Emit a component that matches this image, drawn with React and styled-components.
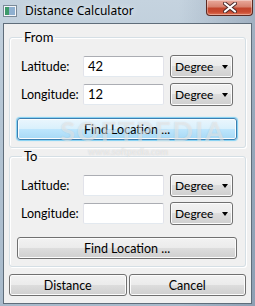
import React from "react";
import styled, { createGlobalStyle, css } from "styled-components";

const Global = createGlobalStyle`
  html, body { margin: 0; padding: 0; }
  body {
    width: 255px;
    height: 306px;
    overflow: hidden;
    font-family: Lato, "Noto Sans", "DejaVu Sans", sans-serif;
  }
`;

const Window = styled.div`
  position: relative;
  width: 255px;
  height: 306px;
  box-sizing: border-box;
  display: flex;
  flex-direction: column;
  background:
    linear-gradient(90deg, rgba(255,255,255,0) 70%, rgba(60,80,110,0.25) 100%),
    linear-gradient(180deg, #c5d3df 0%, #b4c5d4 40%, #a8bacb 100%);
  overflow: hidden;
`;

const TitleBar = styled.div`
  height: 23px;
  display: flex;
  align-items: flex-start;
  padding-left: 3px;
  flex-shrink: 0;
`;

const AppIcon = styled.svg`
  width: 14px;
  height: 12px;
  margin-top: 5px;
  flex-shrink: 0;
`;

const Title = styled.span`
  margin-left: 8px;
  margin-top: 3px;
  font-family: "Noto Sans", sans-serif;
  font-size: 12px;
  line-height: 16px;
  color: #000;
  text-shadow: 0 0 6px rgba(255,255,255,0.9);
`;

const CloseButton = styled.div`
  margin-left: auto;
  margin-right: 2px;
  width: 47px;
  height: 16px;
  box-sizing: border-box;
  border: 1px solid #5c2a22;
  border-top: none;
  border-radius: 0 0 4px 4px;
  background: linear-gradient(180deg, #e9aa9c 0%, #d7826f 45%, #c2452c 55%, #c94b31 80%, #e0785b 100%);
  box-shadow: inset 0 0 0 1px rgba(255,255,255,0.35);
  display: flex;
  align-items: center;
  justify-content: center;
`;

const Client = styled.div`
  margin: 0 3px 0 3px;
  height: 281px;
  box-sizing: border-box;
  border: 1px solid #5f6d7a;
  background: #f0f0f0;
  padding: 5px 5px 0 5px;
  display: flex;
  flex-direction: column;
`;

const Group = styled.fieldset`
  margin: 0;
  width: 237px;
  box-sizing: border-box;
  padding: 10px 7px 7px 7px;
  border: 1px solid #d5dfe5;
  border-radius: 3px;
  box-shadow: inset 1px 1px 0 #fff, 1px 1px 0 #fff;
  min-inline-size: 0;
`;

const Legend = styled.legend`
  margin-left: 5px;
  padding: 0 2px;
  font-size: 13px;
  line-height: 16px;
  color: #000;
`;

const Rows = styled.div`
  display: flex;
  flex-direction: column;
  gap: 6px;
`;

const Row = styled.div`
  display: flex;
  align-items: center;
  height: 22px;
`;

const FieldLabel = styled.span`
  width: 62px;
  margin-left: 4px;
  font-size: 12.5px;
  color: #000;
  white-space: nowrap;
`;

const TextBox = styled.div`
  width: 81px;
  height: 21px;
  box-sizing: border-box;
  border: 1px solid #e2e3ea;
  border-top-color: #abadb3;
  border-bottom-color: #e3e9ef;
  border-radius: 2px;
  background: #fff;
  padding-left: 4px;
  font-size: 13px;
  line-height: 19px;
  color: #000;
`;

const buttonFace = css`
  box-sizing: border-box;
  border: 1px solid #707070;
  border-radius: 3px;
  background: linear-gradient(180deg, #f2f2f2 0%, #ebebeb 49%, #dddddd 50%, #cfcfcf 100%);
  box-shadow: inset 0 0 0 1px #fcfcfc;
  font-family: inherit;
  font-size: 12.5px;
  color: #000;
`;

const Combo = styled.div`
  ${buttonFace}
  margin-left: 6px;
  width: 63px;
  height: 23px;
  display: flex;
  align-items: center;
  padding: 0 4px 0 4px;
  justify-content: space-between;
  font-size: 12px;
`;

const Arrow = styled.span`
  width: 0;
  height: 0;
  border-left: 3.5px solid transparent;
  border-right: 3.5px solid transparent;
  border-top: 4px solid #000;
  margin-top: 1px;
`;

const PushButton = styled.div`
  ${buttonFace}
  height: 22px;
  display: flex;
  align-items: center;
  justify-content: center;
  ${(p) =>
    p.$focused &&
    css`
      border-color: #3c7fb1;
      background: linear-gradient(180deg, #eaf6fd 0%, #d9f0fc 49%, #bee6fd 50%, #a7d9f5 100%);
      box-shadow: inset 0 0 0 1px #fcfcfc, 0 0 1px 1px #7fd0f3;
    `}
`;

const FindButton = styled(PushButton)`
  margin-top: 13px;
  width: 220px;
`;

const Footer = styled.div`
  display: flex;
  gap: 2px;
  margin-top: 7px;
`;

const FooterButton = styled(PushButton)`
  flex: 1;
`;

const Watermark = styled.div`
  position: absolute;
  left: ${(p) => p.$x}px;
  top: ${(p) => p.$y}px;
  font-size: ${(p) => p.$size}px;
  font-weight: bold;
  letter-spacing: ${(p) => p.$spacing || 0}px;
  color: rgba(255, 255, 255, 0.45);
  text-shadow: 0 0 1px rgba(120, 120, 120, 0.25);
  pointer-events: none;
  white-space: nowrap;
`;

const Coordinates = ({ lat, lon }) => (
  <Rows>
    <Row>
      <FieldLabel>Latitude:</FieldLabel>
      <TextBox>{lat}</TextBox>
      <Combo>
        Degree
        <Arrow />
      </Combo>
    </Row>
    <Row>
      <FieldLabel>Longitude:</FieldLabel>
      <TextBox>{lon}</TextBox>
      <Combo>
        Degree
        <Arrow />
      </Combo>
    </Row>
  </Rows>
);

export default function App() {
  return (
    <>
      <Global />
      <Window>
        <TitleBar>
          <AppIcon viewBox="0 0 14 12">
            <rect x="0.5" y="0.5" width="13" height="11" fill="#f4f6f8" stroke="#7a8a98" />
            <rect x="2" y="2" width="4" height="8" fill="#3d9a6a" />
            <rect x="6" y="2" width="6" height="8" fill="#8fb0d0" />
          </AppIcon>
          <Title>Distance Calculator</Title>
          <CloseButton>
            <svg width="14" height="11" viewBox="0 0 14 11">
              <path d="M2 1.5 L12 9.5 M12 1.5 L2 9.5" stroke="#4a2a2a" strokeWidth="4" strokeLinecap="round" />
              <path d="M2 1.5 L12 9.5 M12 1.5 L2 9.5" stroke="#fff" strokeWidth="2.2" strokeLinecap="round" />
            </svg>
          </CloseButton>
        </TitleBar>
        <Client>
          <Group>
            <Legend>From</Legend>
            <Coordinates lat="42" lon="12" />
            <FindButton $focused>Find Location ...</FindButton>
          </Group>
          <Group>
            <Legend>To</Legend>
            <Coordinates lat="" lon="" />
            <FindButton>Find Location ...</FindButton>
          </Group>
          <Footer>
            <FooterButton>Distance</FooterButton>
            <FooterButton>Cancel</FooterButton>
          </Footer>
        </Client>
        <Watermark $x={60} $y={114} $size={27} $spacing={2}>SOFTPEDIA</Watermark>
        <Watermark $x={88} $y={146} $size={9}>www.softpedia.com</Watermark>
      </Window>
    </>
  );
}
